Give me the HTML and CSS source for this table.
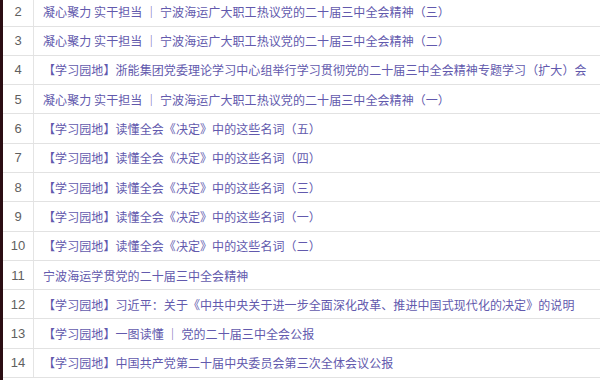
FILE: index.html
```html
<!DOCTYPE html>
<html lang="zh-CN">
<head>
<meta charset="utf-8">
<link rel="stylesheet" href="styles.css">
</head>
<body>
<div class="page">
  <div class="strip"></div>
  <table class="list">
    <tbody>
      <tr><td class="num">2</td><td class="title">凝心聚力 实干担当 ｜ 宁波海运广大职工热议党的二十届三中全会精神（三）</td></tr>
      <tr><td class="num">3</td><td class="title">凝心聚力 实干担当 ｜ 宁波海运广大职工热议党的二十届三中全会精神（二）</td></tr>
      <tr><td class="num">4</td><td class="title">【学习园地】浙能集团党委理论学习中心组举行学习贯彻党的二十届三中全会精神专题学习（扩大）会</td></tr>
      <tr><td class="num">5</td><td class="title">凝心聚力 实干担当 ｜ 宁波海运广大职工热议党的二十届三中全会精神（一）</td></tr>
      <tr><td class="num">6</td><td class="title">【学习园地】读懂全会《决定》中的这些名词（五）</td></tr>
      <tr><td class="num">7</td><td class="title">【学习园地】读懂全会《决定》中的这些名词（四）</td></tr>
      <tr><td class="num">8</td><td class="title">【学习园地】读懂全会《决定》中的这些名词（三）</td></tr>
      <tr><td class="num">9</td><td class="title">【学习园地】读懂全会《决定》中的这些名词（一）</td></tr>
      <tr><td class="num">10</td><td class="title">【学习园地】读懂全会《决定》中的这些名词（二）</td></tr>
      <tr><td class="num">11</td><td class="title">宁波海运学贯党的二十届三中全会精神</td></tr>
      <tr><td class="num">12</td><td class="title">【学习园地】习近平：关于《中共中央关于进一步全面深化改革、推进中国式现代化的决定》的说明</td></tr>
      <tr><td class="num">13</td><td class="title">【学习园地】一图读懂 ｜ 党的二十届三中全会公报</td></tr>
      <tr><td class="num">14</td><td class="title">【学习园地】中国共产党第二十届中央委员会第三次全体会议公报</td></tr>
    </tbody>
  </table>
</div>
</body>
</html>
```
FILE: styles.css
```css
html, body {
  margin: 0;
  padding: 0;
  background: #ffffff;
}
.page {
  display: flex;
  height: 380px;
  overflow: hidden;
}
.strip {
  width: 3px;
  flex: 0 0 3px;
  background: #2b0d13;
}
.list {
  flex: 1;
  margin-top: -3.3px;
  border-collapse: collapse;
  align-self: flex-start;
  font-family: "Noto Sans CJK SC", "Liberation Sans", sans-serif;
  font-size: 12px;
}
.list tr {
  height: 29.3px;
}
.list td {
  border-bottom: 1px solid #e2e2e2;
  padding: 0;
  white-space: nowrap;
  vertical-align: middle;
}
.num {
  width: 30px;
  text-align: center;
  color: #5f5f5f;
  font-family: "Liberation Sans", Arial, sans-serif;
  font-size: 13px;
  border-right: 1px solid #e4e4e4;
}
.title {
  padding-left: 9px !important;
  color: #6259ad;
  letter-spacing: 0.08px;
}
```
